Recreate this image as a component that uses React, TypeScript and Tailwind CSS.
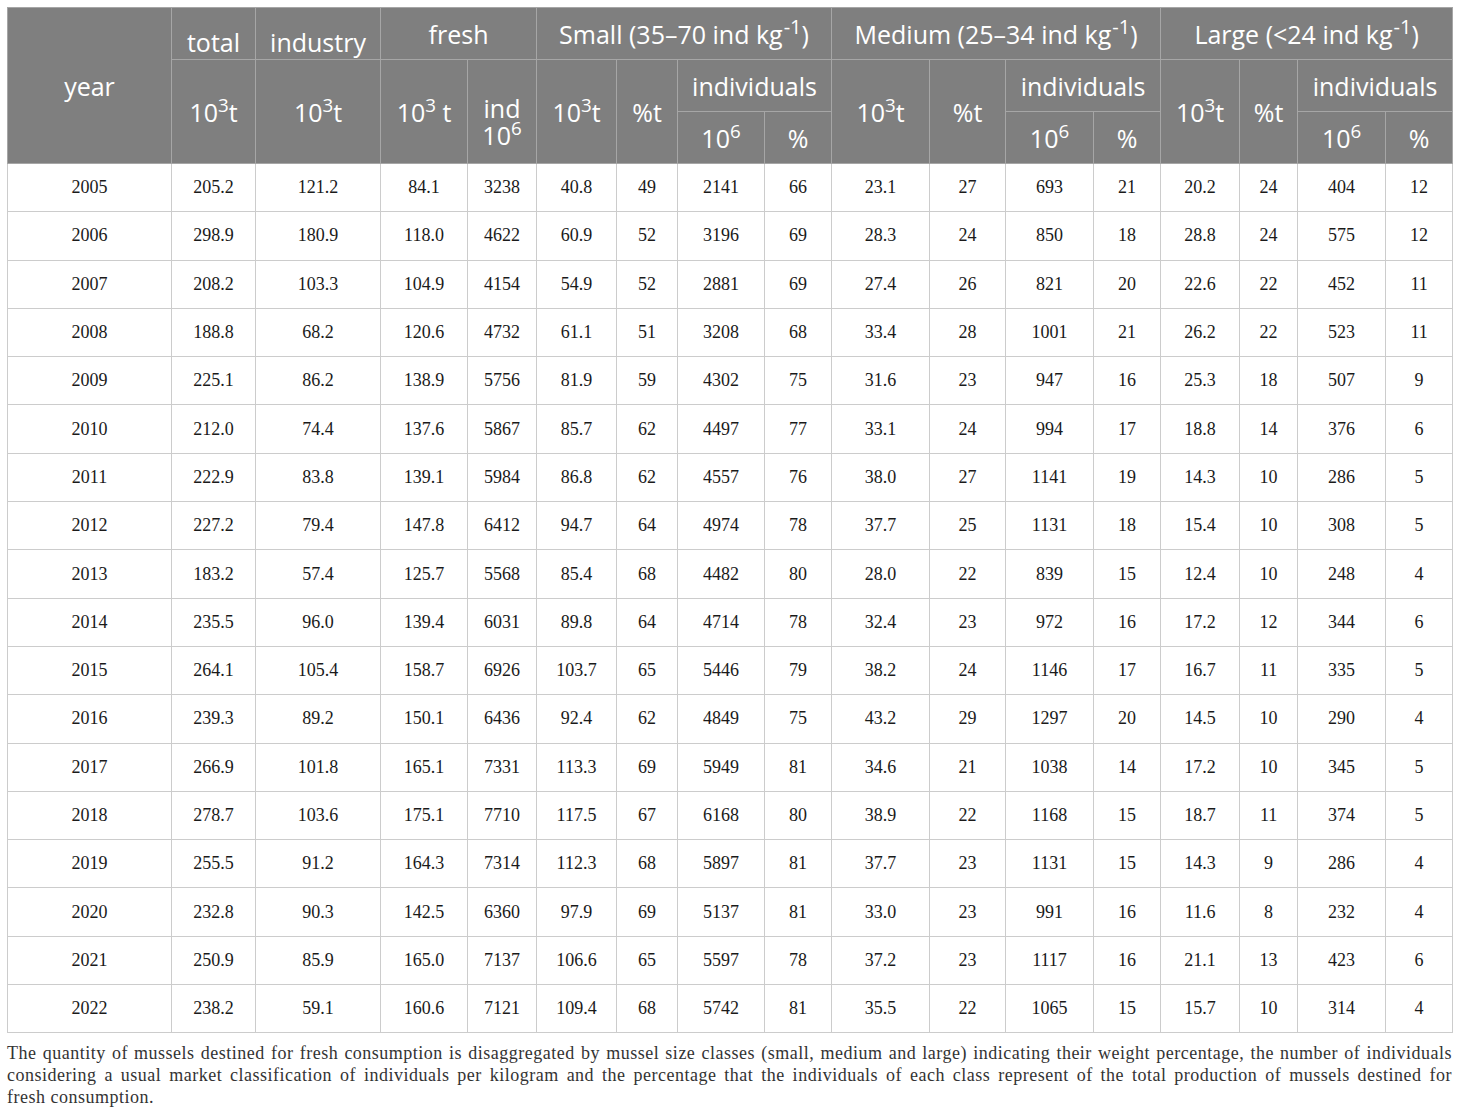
import React from 'react';

const rows: string[][] = [
  ['2005', '205.2', '121.2', '84.1', '3238', '40.8', '49', '2141', '66', '23.1', '27', '693', '21', '20.2', '24', '404', '12'],
  ['2006', '298.9', '180.9', '118.0', '4622', '60.9', '52', '3196', '69', '28.3', '24', '850', '18', '28.8', '24', '575', '12'],
  ['2007', '208.2', '103.3', '104.9', '4154', '54.9', '52', '2881', '69', '27.4', '26', '821', '20', '22.6', '22', '452', '11'],
  ['2008', '188.8', '68.2', '120.6', '4732', '61.1', '51', '3208', '68', '33.4', '28', '1001', '21', '26.2', '22', '523', '11'],
  ['2009', '225.1', '86.2', '138.9', '5756', '81.9', '59', '4302', '75', '31.6', '23', '947', '16', '25.3', '18', '507', '9'],
  ['2010', '212.0', '74.4', '137.6', '5867', '85.7', '62', '4497', '77', '33.1', '24', '994', '17', '18.8', '14', '376', '6'],
  ['2011', '222.9', '83.8', '139.1', '5984', '86.8', '62', '4557', '76', '38.0', '27', '1141', '19', '14.3', '10', '286', '5'],
  ['2012', '227.2', '79.4', '147.8', '6412', '94.7', '64', '4974', '78', '37.7', '25', '1131', '18', '15.4', '10', '308', '5'],
  ['2013', '183.2', '57.4', '125.7', '5568', '85.4', '68', '4482', '80', '28.0', '22', '839', '15', '12.4', '10', '248', '4'],
  ['2014', '235.5', '96.0', '139.4', '6031', '89.8', '64', '4714', '78', '32.4', '23', '972', '16', '17.2', '12', '344', '6'],
  ['2015', '264.1', '105.4', '158.7', '6926', '103.7', '65', '5446', '79', '38.2', '24', '1146', '17', '16.7', '11', '335', '5'],
  ['2016', '239.3', '89.2', '150.1', '6436', '92.4', '62', '4849', '75', '43.2', '29', '1297', '20', '14.5', '10', '290', '4'],
  ['2017', '266.9', '101.8', '165.1', '7331', '113.3', '69', '5949', '81', '34.6', '21', '1038', '14', '17.2', '10', '345', '5'],
  ['2018', '278.7', '103.6', '175.1', '7710', '117.5', '67', '6168', '80', '38.9', '22', '1168', '15', '18.7', '11', '374', '5'],
  ['2019', '255.5', '91.2', '164.3', '7314', '112.3', '68', '5897', '81', '37.7', '23', '1131', '15', '14.3', '9', '286', '4'],
  ['2020', '232.8', '90.3', '142.5', '6360', '97.9', '69', '5137', '81', '33.0', '23', '991', '16', '11.6', '8', '232', '4'],
  ['2021', '250.9', '85.9', '165.0', '7137', '106.6', '65', '5597', '78', '37.2', '23', '1117', '16', '21.1', '13', '423', '6'],
  ['2022', '238.2', '59.1', '160.6', '7121', '109.4', '68', '5742', '81', '35.5', '22', '1065', '15', '15.7', '10', '314', '4'],
];

// column widths measured off the picture
const widths = [164, 84, 125, 87, 69, 80, 61, 87, 67, 98, 76, 88, 67, 79, 58, 88, 67];

const th = 'border border-[#a6a6a6] px-1 text-center font-normal';

const Kg = () => <sup className="text-[80%] ml-[1px]">-1</sup>;

const App = () => {
  return (
    <div className="min-h-screen bg-white px-[7px] pt-[7px]">
      <table className="table-fixed border-collapse border border-[#cccccc]" style={{ width: 1445 }}>
        <colgroup>
          {widths.map((w, i) => (
            <col key={i} style={{ width: w }} />
          ))}
        </colgroup>
        <thead className="bg-[#7f7f7f] text-white text-[25px] leading-[28px] font-['Open_Sans',sans-serif]">
          <tr className="h-[52px]">
            <th rowSpan={3} className={th}>year</th>
            <th className={`${th} align-bottom pb-[3px]`}>total</th>
            <th className={`${th} align-bottom pb-[3px]`}>industry</th>
            <th colSpan={2} className={th}>fresh</th>
            <th colSpan={4} className={`${th} whitespace-nowrap`}>Small (35–70 ind kg<Kg />)</th>
            <th colSpan={4} className={`${th} whitespace-nowrap`}>Medium (25–34 ind kg<Kg />)</th>
            <th colSpan={4} className={`${th} whitespace-nowrap`}>Large (&lt;24 ind kg<Kg />)</th>
          </tr>
          <tr className="h-[52px]">
            <th rowSpan={2} className={th}>10<sup>3</sup>t</th>
            <th rowSpan={2} className={th}>10<sup>3</sup>t</th>
            <th rowSpan={2} className={th}>10<sup>3</sup> t</th>
            <th rowSpan={2} className={`${th} leading-[27px] pt-[20px]`}>ind<br />10<sup>6</sup></th>
            {[0, 1, 2].map((k) => (
              <React.Fragment key={k}>
                <th rowSpan={2} className={th}>10<sup>3</sup>t</th>
                <th rowSpan={2} className={th}>%t</th>
                <th colSpan={2} className={th}>individuals</th>
              </React.Fragment>
            ))}
          </tr>
          <tr className="h-[52px]">
            {[0, 1, 2].map((k) => (
              <React.Fragment key={k}>
                <th className={th}>10<sup>6</sup></th>
                <th className={th}>%</th>
              </React.Fragment>
            ))}
          </tr>
        </thead>
        <tbody className="text-[18px] text-[#1a1a1a] font-['Liberation_Serif',serif]">
          {rows.map((r) => (
            <tr key={r[0]} className="h-[48.3px]">
              {r.map((v, i) => (
                <td key={i} className="border border-[#cccccc] text-center">{v}</td>
              ))}
            </tr>
          ))}
        </tbody>
      </table>
      <p className="mt-[9px] text-justify text-[18px] tracking-[0.5px] leading-[22px] text-[#333333] font-['Liberation_Serif',serif]" style={{ width: 1445 }}>
        The quantity of mussels destined for fresh consumption is disaggregated by mussel size classes (small, medium and large) indicating their weight percentage, the number of individuals considering a usual market classification of individuals per kilogram and the percentage that the individuals of each class represent of the total production of mussels destined for <span className="whitespace-nowrap">fresh consumption.</span>
      </p>
    </div>
  );
};

export default App;
